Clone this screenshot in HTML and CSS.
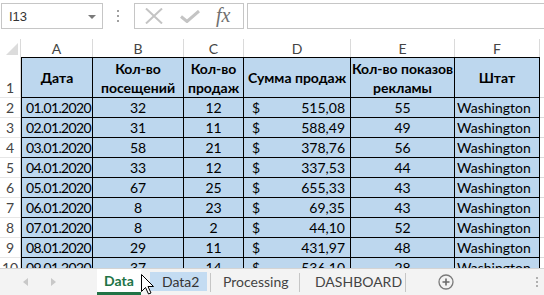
FILE: index.html
```html
<!DOCTYPE html>
<html>
<head>
<meta charset="utf-8">
<link rel="stylesheet" href="styles.css">
</head>
<body>
<div class="app">
  <div class="fbar">
    <div class="namebox">
      <span class="nb-text">I13</span>
      <svg class="nb-caret" width="8" height="4" viewBox="0 0 8 4"><path d="M0 0h8L4 4z" fill="#7a7a7a"/></svg>
    </div>
    <div class="grip">
      <svg width="3" height="12" viewBox="0 0 3 12"><rect x="0" y="0" width="2" height="2" fill="#a0a0a0"/><rect x="0" y="5" width="2" height="2" fill="#a0a0a0"/><rect x="0" y="10" width="2" height="2" fill="#a0a0a0"/></svg>
    </div>
    <div class="fxbox">
      <svg class="ic-x" width="18" height="16" viewBox="0 0 18 16"><path d="M1 0.5L17 15.5M17 0.5L1 15.5" stroke="#c4c4c4" stroke-width="2" fill="none"/></svg>
      <svg class="ic-ok" width="20" height="13" viewBox="0 0 20 13"><path d="M1 6.5L7 11.5L19 1" stroke="#c4c4c4" stroke-width="3" fill="none"/></svg>
      <span class="fx">fx</span>
    </div>
    <div class="finput"></div>
  </div>

  <div class="sheet">
    <div class="grid">
      <div class="ch corner"><svg width="12" height="12" viewBox="0 0 12 12"><path d="M12 0V12H0z" fill="#dcdcdc"/></svg></div>
      <div class="ch">A</div>
      <div class="ch">B</div>
      <div class="ch">C</div>
      <div class="ch">D</div>
      <div class="ch">E</div>
      <div class="ch">F</div>
      <div class="ch last"></div>

      <div class="rh r1">1</div>
      <div class="c h first">Дата</div>
      <div class="c h">Кол-во<br>посещений</div>
      <div class="c h">Кол-во<br>продаж</div>
      <div class="c h">Сумма продаж</div>
      <div class="c h">Кол-во показов<br>рекламы</div>
      <div class="c h">Штат</div>
      <div class="g r1"></div>

      <div class="rh">2</div><div class="c first dt">01.01.2020</div><div class="c ctr">32</div><div class="c ctr">12</div><div class="c acc"><span>$</span><span>515,08</span></div><div class="c ctr">55</div><div class="c lft">Washington</div><div class="g"></div>
      <div class="rh">3</div><div class="c first dt">02.01.2020</div><div class="c ctr">31</div><div class="c ctr">11</div><div class="c acc"><span>$</span><span>588,49</span></div><div class="c ctr">49</div><div class="c lft">Washington</div><div class="g"></div>
      <div class="rh">4</div><div class="c first dt">03.01.2020</div><div class="c ctr">58</div><div class="c ctr">21</div><div class="c acc"><span>$</span><span>378,76</span></div><div class="c ctr">56</div><div class="c lft">Washington</div><div class="g"></div>
      <div class="rh">5</div><div class="c first dt">04.01.2020</div><div class="c ctr">33</div><div class="c ctr">12</div><div class="c acc"><span>$</span><span>337,53</span></div><div class="c ctr">44</div><div class="c lft">Washington</div><div class="g"></div>
      <div class="rh">6</div><div class="c first dt">05.01.2020</div><div class="c ctr">67</div><div class="c ctr">25</div><div class="c acc"><span>$</span><span>655,33</span></div><div class="c ctr">43</div><div class="c lft">Washington</div><div class="g"></div>
      <div class="rh">7</div><div class="c first dt">06.01.2020</div><div class="c ctr">8</div><div class="c ctr">23</div><div class="c acc"><span>$</span><span>69,35</span></div><div class="c ctr">43</div><div class="c lft">Washington</div><div class="g"></div>
      <div class="rh">8</div><div class="c first dt">07.01.2020</div><div class="c ctr">8</div><div class="c ctr">2</div><div class="c acc"><span>$</span><span>44,10</span></div><div class="c ctr">52</div><div class="c lft">Washington</div><div class="g"></div>
      <div class="rh">9</div><div class="c first dt">08.01.2020</div><div class="c ctr">29</div><div class="c ctr">11</div><div class="c acc"><span>$</span><span>431,97</span></div><div class="c ctr">48</div><div class="c lft">Washington</div><div class="g"></div>
      <div class="rh">10</div><div class="c first dt">09.01.2020</div><div class="c ctr">37</div><div class="c ctr">14</div><div class="c acc"><span>$</span><span>536,10</span></div><div class="c ctr">28</div><div class="c lft">Washington</div><div class="g"></div>
    </div>
  </div>

  <div class="tabs">
    <div class="nav">
      <svg width="5" height="8" viewBox="0 0 5 8"><path d="M5 0V8L0 4z" fill="#c8c8c8"/></svg>
      <svg width="5" height="8" viewBox="0 0 5 8"><path d="M0 0V8L5 4z" fill="#c8c8c8"/></svg>
    </div>
    <div class="tab active">Data</div>
    <div class="tab hover">Data2</div>
    <div class="sep"></div>
    <div class="tab proc">Processing</div>
    <div class="sep"></div>
    <div class="tab dash">DASHBOARD</div>
    <div class="sep"></div>
    <div class="add">
      <svg width="16" height="16" viewBox="0 0 16 16"><circle cx="8" cy="8" r="7" fill="none" stroke="#7a7a7a" stroke-width="1.3"/><path d="M8 4.5V11.5M4.5 8H11.5" stroke="#6a6a6a" stroke-width="1.6"/></svg>
    </div>
    <div class="tgrip">
      <svg width="2" height="10" viewBox="0 0 2 10"><rect x="0" y="0" width="2" height="2" fill="#b0b0b0"/><rect x="0" y="4" width="2" height="2" fill="#b0b0b0"/><rect x="0" y="8" width="2" height="2" fill="#b0b0b0"/></svg>
    </div>
  </div>

  <svg class="cursor" width="13" height="21" viewBox="0 0 13 21"><path d="M0.5 0.5V17.5L4.5 13.5L7.5 20L10 19L7 12.5H12.5Z" fill="#fff" stroke="#000" stroke-width="1"/></svg>
</div>
</body>
</html>
```

FILE: styles.css
```css
* { box-sizing: border-box; }
html, body { margin: 0; padding: 0; }
body { width: 544px; height: 295px; overflow: hidden; background: #fff; font-family: Lato, "Liberation Sans", sans-serif; }
.app { position: relative; width: 544px; height: 295px; overflow: hidden; display: flex; flex-direction: column; }

.fbar { height: 39px; flex: none; display: flex; align-items: flex-start; padding-top: 3px; background: #fff; }
.namebox { margin-left: 1px; width: 102px; height: 26px; border: 1px solid #c6c6c6; display: flex; align-items: center; justify-content: space-between; padding: 0 6px 0 7px; }
.nb-text { font-family: "Liberation Sans", sans-serif; font-size: 13px; color: #333; }
.nb-caret { margin-top: 1px; }
.grip { width: 31px; height: 26px; display: flex; align-items: center; justify-content: center; }
.fxbox { width: 110px; height: 26px; border: 1px solid #c6c6c6; display: flex; align-items: center; position: relative; }
.ic-x { margin-left: 10px; }
.ic-ok { margin-left: 17px; }
.fx { margin-left: 16px; font-family: "Liberation Serif", serif; font-style: italic; font-size: 20px; color: #707070; line-height: 1; margin-top: -2px; }
.finput { margin-left: 3px; flex: 1; height: 26px; border: 1px solid #c6c6c6; border-right: none; }

.sheet { height: 229px; flex: none; overflow: hidden; }
.grid { display: grid; grid-template-columns: 21px 72px 91px 60px 107px 104px 85px 1fr; grid-template-rows: 18px 41px; grid-auto-rows: 20px; }

.ch { font-size: 14px; color: #444; display: flex; align-items: center; justify-content: center; border-right: 1px solid #dadada; line-height: 1; padding-top: 1px; }
.ch.corner { align-items: flex-end; justify-content: flex-end; padding: 0 2px 2px 0; border-right: 1px solid #dadada; }
.ch.last { border-right: none; }

.rh { font-size: 14px; color: #444; display: flex; align-items: flex-end; justify-content: center; line-height: 19px; border-bottom: 1px solid #e6e6e6; border-right: 1px solid #dadada; }

.c { background: #bdd7ee; border-right: 1px solid #000; border-bottom: 1px solid #000; font-size: 14px; color: #000; line-height: 19px; display: flex; align-items: flex-end; white-space: nowrap; overflow: hidden; }
.c.first { border-left: 1px solid #000; }
.c.h { font-weight: bold; border-top: 1px solid #000; align-items: center; justify-content: center; text-align: center; }
.dt { justify-content: flex-end; padding-right: 1px; letter-spacing: -0.65px; }
.ctr { justify-content: center; }
.lft { padding-left: 2px; }
.acc { justify-content: space-between; padding: 0 5px 0 8px; }

.g { border-bottom: 1px solid #dadada; }

.tabs { height: 27px; flex: none; display: flex; align-items: stretch; background: #f3f3f3; border-top: 1px solid #d4d4d4; font-size: 14px; }
.nav { width: 97px; display: flex; align-items: center; padding-left: 23px; gap: 23px; }
.tab { display: flex; align-items: center; color: #444; padding: 0 13px 2px; white-space: nowrap; }
.tab.active { background: #fff; color: #217346; font-weight: bold; width: 44px; padding: 0; justify-content: center; border-bottom: 3px solid #217346; }
.tab.hover { background: #c4dcf2; margin: 3px 3px 4px 9px; padding: 0 0 0 12px; width: 57px; color: #333; }
.tab.proc { padding: 0 12px 2px; width: 88px; }
.tab.dash { padding: 0 0 2px 15px; width: 105px; }
.sep { width: 1px; background: #c6c6c6; margin: 4px 0 3px; }
.add { width: 80px; display: flex; align-items: center; justify-content: center; }
.tgrip { flex: 1; display: flex; align-items: center; justify-content: flex-end; padding-right: 6px; }

.cursor { position: absolute; left: 141px; top: 274px; }
```
